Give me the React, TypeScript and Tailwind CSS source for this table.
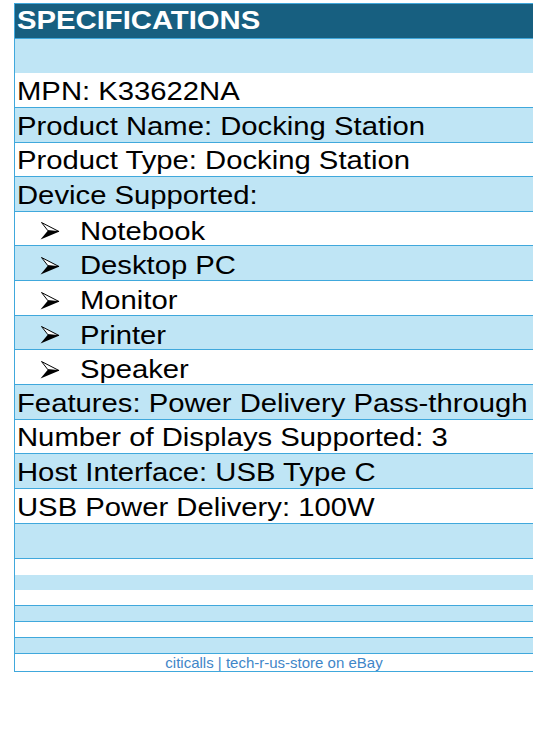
import React from "react";

type Row = {
  text?: string;
  bullet?: boolean;
  bg: "dark" | "blue" | "white";
  h: string;
  line: boolean;
  footer?: boolean;
};

const rows: Row[] = [
  { text: "SPECIFICATIONS", bg: "dark", h: "h-[35px]", line: true },
  { bg: "blue", h: "h-[34px]", line: false },
  { text: "MPN: K33622NA", bg: "white", h: "h-[35px]", line: true },
  { text: "Product Name: Docking Station", bg: "blue", h: "h-[35px]", line: true },
  { text: "Product Type: Docking Station", bg: "white", h: "h-[34px]", line: true },
  { text: "Device Supported:", bg: "blue", h: "h-[35px]", line: true },
  { text: "Notebook", bullet: true, bg: "white", h: "h-[34px]", line: true },
  { text: "Desktop PC", bullet: true, bg: "blue", h: "h-[35px]", line: true },
  { text: "Monitor", bullet: true, bg: "white", h: "h-[35px]", line: true },
  { text: "Printer", bullet: true, bg: "blue", h: "h-[34px]", line: true },
  { text: "Speaker", bullet: true, bg: "white", h: "h-[35px]", line: true },
  { text: "Features: Power Delivery Pass-through", bg: "blue", h: "h-[35px]", line: true },
  { text: "Number of Displays Supported: 3", bg: "white", h: "h-[34px]", line: true },
  { text: "Host Interface: USB Type C", bg: "blue", h: "h-[35px]", line: true },
  { text: "USB Power Delivery: 100W", bg: "white", h: "h-[35px]", line: true },
  { bg: "blue", h: "h-[35px]", line: true },
  { bg: "white", h: "h-[16px]", line: false },
  { bg: "blue", h: "h-[15px]", line: false },
  { bg: "white", h: "h-[16px]", line: true },
  { bg: "blue", h: "h-[16px]", line: true },
  { bg: "white", h: "h-[16px]", line: true },
  { bg: "blue", h: "h-[16px]", line: true },
  { text: "citicalls | tech-r-us-store on eBay", bg: "white", h: "h-[18px]", line: true, footer: true },
];

const bgClass = {
  dark: "bg-[#175f80]",
  blue: "bg-[#bfe5f5]",
  white: "bg-white",
};

function Arrow() {
  return (
    <svg width="20" height="20" viewBox="0 0 20 20" className="shrink-0">
      <path d="M1.5 1.5 L19 10.5 L8 9.8 Z" fill="white" stroke="black" strokeWidth="1" strokeLinejoin="miter" />
      <path d="M8 9.5 L19.5 10.5 L0.5 18.5 Z" fill="black" />
    </svg>
  );
}

export default function App() {
  return (
    <div className="min-h-screen bg-white pl-[14px] pt-[3px] font-['Liberation_Sans',Arial,sans-serif]">
      <div className="w-[519px] border-t border-l border-[#40a8dc]">
        {rows.map((r, i) => (
          <div
            key={i}
            className={`${r.h} ${bgClass[r.bg]} ${r.line ? "border-b border-[#40a8dc]" : ""} flex items-center overflow-hidden`}
          >
            {r.footer ? (
              <div className="w-full text-center text-[15px] leading-none text-[#3f86c8]">{r.text}</div>
            ) : r.bullet ? (
              <div className="flex items-center pl-[25px] pt-[5px]">
                <Arrow />
                <span className="inline-block origin-left scale-x-[1.17] pl-[17px] text-[25px] leading-none text-black">
                  {r.text}
                </span>
              </div>
            ) : r.text ? (
              <div className={`pl-[2px] ${r.bg === "dark" ? "pt-[2px]" : "pt-[5px]"}`}>
                <span
                  className={`inline-block origin-left scale-x-[1.17] whitespace-nowrap text-[25px] leading-none ${
                    r.bg === "dark" ? "font-bold text-white" : "text-black"
                  }`}
                >
                  {r.text}
                </span>
              </div>
            ) : null}
          </div>
        ))}
      </div>
    </div>
  );
}
